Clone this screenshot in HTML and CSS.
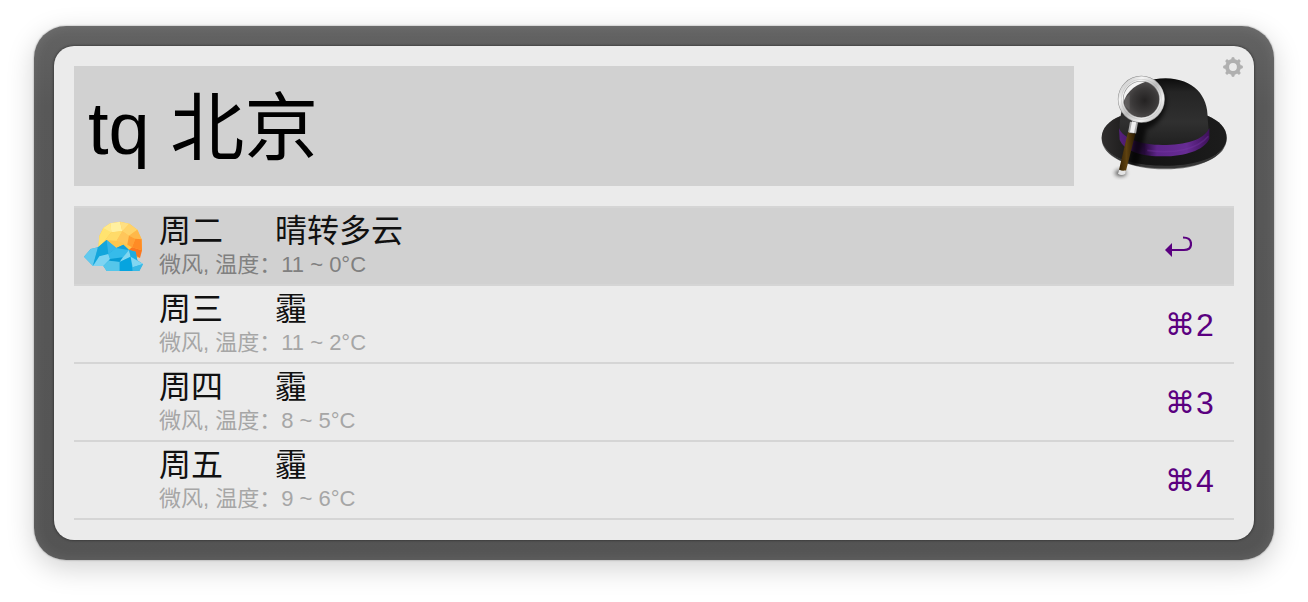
FILE: index.html
```html
<!DOCTYPE html>
<html lang="zh-CN">
<head>
  <meta charset="UTF-8" />
  <meta name="viewport" content="width=device-width, initial-scale=1.0"/>
  <title>天气 - 北京</title>
  <link rel="stylesheet" href="styles.css">
</head>
<body>
  <main class="janela">
    <div class="painel">
      <button class="botao-config" aria-label="设置">
        <svg viewBox="0 0 20 20">
          <g fill="none" stroke="#b0b0b0" stroke-linecap="round">
            <circle cx="10" cy="10" r="5.9" stroke-width="4"/>
            <path d="M10 1.700v2M10 16.300v2M1.700 10h2M16.300 10h2M4.100 4.100l1.500 1.500M14.400 14.400l1.500 1.500M15.900 4.100l-1.500 1.500M5.600 14.400l-1.500 1.500" stroke-width="3.4"/>
          </g>
        </svg>
      </button>

      <div class="topo">
        <input class="busca" type="text" value="tq 北京" aria-label="搜索">
        <svg class="chapeu" viewBox="30 60 420 360" aria-hidden="true">
          <defs>
            <linearGradient id="copa" x1="0" y1="0" x2="0" y2="1">
              <stop offset="0" stop-color="#0c0c0c"/>
              <stop offset=".2" stop-color="#242424"/>
              <stop offset=".65" stop-color="#303030"/>
              <stop offset="1" stop-color="#202020"/>
            </linearGradient>
            <linearGradient id="aba" x1="0" y1="0" x2="1" y2="0">
              <stop offset="0" stop-color="#302e2e"/>
              <stop offset=".3" stop-color="#131313"/>
              <stop offset="1" stop-color="#1c1c1c"/>
            </linearGradient>
            <linearGradient id="fita" x1="0" y1="0" x2="1" y2="0">
              <stop offset="0" stop-color="#55207c"/>
              <stop offset=".12" stop-color="#4c1a70"/>
              <stop offset=".28" stop-color="#260b3a"/>
              <stop offset=".42" stop-color="#5d2589"/>
              <stop offset=".75" stop-color="#672c94"/>
              <stop offset="1" stop-color="#3d1059"/>
            </linearGradient>
            <radialGradient id="lente" cx=".58" cy=".52" r=".6">
              <stop offset="0" stop-color="#242222"/>
              <stop offset=".5" stop-color="#3b3939"/>
              <stop offset="1" stop-color="#625f5f"/>
            </radialGradient>
            <linearGradient id="aro" x1="0" y1="0" x2="1" y2="1">
              <stop offset="0" stop-color="#b5b5b5"/>
              <stop offset=".25" stop-color="#f6f6f6"/>
              <stop offset=".5" stop-color="#bcbcbc"/>
              <stop offset=".75" stop-color="#f1f1f1"/>
              <stop offset="1" stop-color="#b0b0b0"/>
            </linearGradient>
            <linearGradient id="cabo" x1="0" y1="0" x2="1" y2="0">
              <stop offset="0" stop-color="#332104"/>
              <stop offset=".45" stop-color="#5f4210"/>
              <stop offset="1" stop-color="#281900"/>
            </linearGradient>
            <filter id="sombra" x="-50%" y="-50%" width="200%" height="200%">
              <feGaussianBlur stdDeviation="6"/>
            </filter>
            <clipPath id="corte">
              <path d="M53 276C53 247 76 224 108 211C110 160 155 97 245 97C325 98 370 145 371 209C405 224 428 245 428 276C428 330 345 368 242 368C135 367 53 330 53 276Z"/>
            </clipPath>
          </defs>
          <ellipse cx="110" cy="381" rx="17" ry="10" fill="#000" opacity=".65" filter="url(#sombra)"/>
          <path d="M53 278C53 247 76 224 108 211L371 209C405 224 428 245 428 278C428 332 345 370 242 370C135 369 53 332 53 278Z" fill="#777"/>
          <path d="M53 275C53 247 76 224 108 211L371 209C405 224 428 245 428 275C428 327 345 363 242 363C135 362 53 327 53 275Z" fill="url(#aba)"/>
          <path d="M62 306C95 344 165 359 242 359C320 359 390 341 420 305C394 349 320 367 242 367C165 367 92 350 62 306Z" fill="#353535"/>
          <path d="M107 255C104 165 150 97 245 97C329 98 373 150 371 218L374 252C360 286 300 299 235 299C175 298 124 286 107 255Z" fill="url(#copa)"/>
          <path d="M105 247C118 279 172 297 235 297C304 297 360 282 376 246L376 278C360 314 300 331 238 331C174 331 120 316 107 281Z" fill="url(#fita)"/>
          <path d="M190 313C270 325 340 310 373 271" fill="none" stroke="#7a3aa8" stroke-width="5" opacity=".35"/>
          <g clip-path="url(#corte)">
            <path d="M225 118C274 170 227 241 188 249L160 367L130 374L151 241Z" fill="#000" opacity=".7" filter="url(#sombra)"/>
          </g>
          <path d="M138 227L162 229L156 263L132 260Z" fill="#aaa"/>
          <path d="M144 226L157 228L150 261L138 258Z" fill="#efefef"/>
          <path d="M132 258Q144 266 155 260L126 374Q114 379 105 371Z" fill="url(#cabo)"/>
          <path d="M106 371Q115 376 125 373L124 383Q113 391 102 383Z" fill="#e3e3e3"/>
          <circle cx="172" cy="161" r="61" fill="url(#lente)"/>
          <path d="M137 145V193L123 180L121 158Z" fill="#999" opacity=".25"/>
          <path d="M112 163C110 128 140 99 177 99L199 104C160 111 129 132 116 174Z" fill="#f3f3f3"/>
          <circle cx="172" cy="160" r="62" fill="none" stroke="#8a8a8a" stroke-width="17"/>
          <circle cx="172" cy="160" r="62" fill="none" stroke="url(#aro)" stroke-width="14"/>
          <circle cx="172" cy="160" r="60" fill="none" stroke="#999" stroke-width="2" opacity=".4"/>
        </svg>
      </div>

      <ul class="resultados">
        <li class="item selecionado">
          <svg class="icone" viewBox="30 30 180 180" aria-hidden="true">
            <path d="M76 90L88 66L109 52L138 47L166 53L190 71L203 100L204 133L194 155H120L73 125Z" fill="#ffc64d"/>
            <path d="M76 90L88 66L109 52L112 79L94 102L73 125Z" fill="#ffe36f"/>
            <path d="M109 52L138 47L145 76L112 79Z" fill="#fff0a0"/>
            <path d="M138 47L166 53L145 76Z" fill="#ffdf82"/>
            <path d="M166 53L190 71L165 89L145 76Z" fill="#ffd36a"/>
            <path d="M88 66L109 52L112 79Z" fill="#ffe98d"/>
            <path d="M112 79L145 76L128 104L94 102Z" fill="#ffdb69"/>
            <path d="M145 76L165 89L160 116L128 104Z" fill="#ffc65b"/>
            <path d="M165 89L190 71L203 100L184 98Z" fill="#ffb84a"/>
            <path d="M165 89L184 98L174 124L160 116Z" fill="#ff9f35"/>
            <path d="M184 98L203 100L204 133L174 124Z" fill="#ff8b25"/>
            <path d="M174 124L204 133L198 156L160 136Z" fill="#fb761f"/>
            <path d="M30 152L50 129L72 124L98 102L127 126L148 116L165 132L185 137L190 163L207 174L196 195H98L88 180H57Z" fill="#31b6e5"/>
            <path d="M50 129L72 124L57 180L30 152Z" fill="#62c9ed"/>
            <path d="M98 102L116 135L57 177L72 124Z" fill="#12a6dc"/>
            <path d="M98 102L127 126L103 144Z" fill="#36b5e6"/>
            <path d="M57 180L76 151L103 144L108 159L88 180Z" fill="#7dd4f2"/>
            <path d="M103 144L127 126L165 132L147 154L108 159Z" fill="#36bbea"/>
            <path d="M127 126L148 116L165 132Z" fill="#139fd7"/>
            <path d="M108 159L147 154L137 168L105 164Z" fill="#079bd3"/>
            <path d="M165 132L170 152L137 168L147 154Z" fill="#81d7f1"/>
            <path d="M165 132L185 137L190 163L170 152Z" fill="#20ace0"/>
            <path d="M105 164L88 180L98 195H137V168Z" fill="#55c6ea"/>
            <path d="M137 168L170 152L176 195H137Z" fill="#06a4df"/>
            <path d="M170 152L207 174L176 184Z" fill="#80d6f2"/>
            <path d="M176 184L207 174L196 195H176Z" fill="#38b9e6"/>
          </svg>
          <div class="texto">
            <div class="titulo"><span>周二</span><span>晴转多云</span></div>
            <div class="detalhe">微风, 温度：11 ~ 0°C</div>
          </div>
          <div class="atalho">
            <svg class="enter" viewBox="0 0 27 22" role="img" aria-label="Enter">
              <path d="M6 14H19C23.500 14 26 11.500 26 8C26 4 23 1.500 18 1.500" fill="none" stroke="#5a0080" stroke-width="2.2"/>
              <path d="M0 14L7 7V21Z" fill="#5a0080"/>
            </svg>
          </div>
        </li>
        <li class="item">
          <div class="icone"></div>
          <div class="texto">
            <div class="titulo"><span>周三</span><span>霾</span></div>
            <div class="detalhe">微风, 温度：11 ~ 2°C</div>
          </div>
          <div class="atalho"><span class="cmd">⌘</span>2</div>
        </li>
        <li class="item">
          <div class="icone"></div>
          <div class="texto">
            <div class="titulo"><span>周四</span><span>霾</span></div>
            <div class="detalhe">微风, 温度：8 ~ 5°C</div>
          </div>
          <div class="atalho"><span class="cmd">⌘</span>3</div>
        </li>
        <li class="item">
          <div class="icone"></div>
          <div class="texto">
            <div class="titulo"><span>周五</span><span>霾</span></div>
            <div class="detalhe">微风, 温度：9 ~ 6°C</div>
          </div>
          <div class="atalho"><span class="cmd">⌘</span>4</div>
        </li>
      </ul>
    </div>
  </main>
</body>
</html>
```
FILE: styles.css
```css
* {
  box-sizing: border-box;
}

body {
  margin: 0;
  min-height: 100vh;
  padding: 26px 34px;
  background: #fff;
  font-family: "Liberation Sans", "Noto Sans CJK SC", sans-serif;
}

.janela {
  padding: 20px;
  border-radius: 32px;
  background: linear-gradient(#636363, #585858 15%, #545454);
  box-shadow: 0 8px 28px rgba(0,0,0,0.18), 0 0 2px rgba(0,0,0,0.4), inset 0 0 14px rgba(255,255,255,0.1);
}

.painel {
  position: relative;
  padding: 20px;
  border-radius: 20px;
  background: #ebebeb;
  box-shadow: 0 0 3px rgba(0,0,0,0.6);
}

.botao-config {
  position: absolute;
  top: 11px;
  right: 11px;
  width: 20px;
  height: 20px;
  padding: 0;
  border: none;
  background: none;
  cursor: pointer;
}

.botao-config svg {
  display: block;
}

.topo {
  display: flex;
  gap: 20px;
}

.busca {
  flex: 1;
  min-width: 0;
  height: 120px;
  padding: 0 14px 10px;
  border: none;
  border-radius: 0;
  outline: none;
  background: #d1d1d1;
  color: #000;
  font-family: inherit;
  font-size: 74px;
}

.chapeu {
  width: 140px;
  height: 120px;
}

.resultados {
  margin: 20px 0 0;
  padding: 0;
  list-style: none;
  border-top: 2px solid #d5d5d5;
}

.item {
  display: flex;
  align-items: center;
  height: 78px;
  padding: 0 20px 0 10px;
  border-bottom: 2px solid #d5d5d5;
}

.selecionado {
  background: #d1d1d1;
}

.icone {
  width: 60px;
  height: 60px;
}

.texto {
  flex: 1;
  margin-left: 15px;
  padding-bottom: 2px;
}

.titulo {
  display: flex;
  gap: 52px;
  font-size: 32px;
  line-height: 40px;
  color: #111;
}

.detalhe {
  font-size: 22px;
  line-height: 28px;
  color: #a6a6a6;
}

.selecionado .detalhe {
  color: #808080;
}

.atalho {
  display: flex;
  align-items: center;
  width: 49px;
  padding-top: 2px;
  font-size: 32px;
  line-height: 40px;
  color: #5a0080;
}

.cmd {
  width: 31px;
  font-family: "DejaVu Sans", sans-serif;
  font-size: 30px;
}

.enter {
  width: 27px;
  height: 22px;
}
```
